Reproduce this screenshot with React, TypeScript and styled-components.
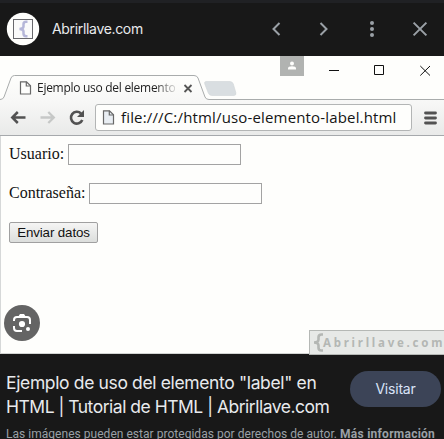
import React from "react";
import styled, { createGlobalStyle } from "styled-components";

const GlobalStyle = createGlobalStyle`
  * { box-sizing: border-box; }
  body { margin: 0; background: #181818; overflow: hidden; }
`;

const Viewer = styled.main`
  width: 444px;
  height: 439px;
  overflow: hidden;
  background: #181818;
  font-family: Inter, sans-serif;
`;

const Header = styled.header`
  height: 56px;
  border-top: 3px solid #202124;
  display: flex;
  align-items: center;
  padding: 0 12px 1px 6px;
`;

const Avatar = styled.svg`
  width: 34px;
  height: 34px;
  flex: none;
`;

const SiteName = styled.div`
  margin: -1px 0 0 12px;
  flex: 1;
  color: #e8eaed;
  font-size: 14px;
  line-height: 20px;
  letter-spacing: -0.33px;
`;

const HeaderActions = styled.nav`
  display: flex;
  gap: 24px;
`;

const IconButton = styled.button`
  width: 24px;
  height: 24px;
  padding: 0;
  border: 0;
  background: none;
  color: #9aa0a6;
  svg { display: block; }
`;

const Browser = styled.section`
  position: relative;
  height: 298px;
  background: #fefefc;
  border-bottom: 1px solid #d2d4d2;
`;

const TabStrip = styled.div`
  height: 44px;
  position: relative;
`;

const StripArt = styled.svg`
  position: absolute;
  inset: 0;
`;

const Tab = styled.div`
  position: absolute;
  left: 19px;
  top: 23px;
  width: 180px;
  height: 18px;
  display: flex;
  align-items: center;
`;

const TabTitle = styled.div`
  margin-left: 5px;
  width: 138px;
  white-space: nowrap;
  font: 12px/18px "Open Sans", sans-serif;
  letter-spacing: -0.28px;
  color: #222;
  mask-image: linear-gradient(90deg, #000 118px, transparent 142px);
`;

const Toolbar = styled.div`
  height: 36px;
  display: flex;
  align-items: center;
  padding: 0 6px 0 10px;
  background: linear-gradient(#f8f8f7, #e9eae9);
  border-bottom: 1px solid #a6a9ac;
`;

const NavIcons = styled.svg`
  width: 85px;
  height: 35px;
  flex: none;
`;

const AddressBar = styled.div`
  width: 317px;
  height: 27px;
  flex: none;
  display: flex;
  align-items: center;
  border: 1px solid #b3b5b5;
  border-radius: 3px;
  background: #fefefc;
  padding-left: 6px;
`;

const Address = styled.span`
  margin: -1px 0 0 6px;
  font: 15px/22px "Open Sans", sans-serif;
  letter-spacing: 0.16px;
  color: #151515;
  white-space: nowrap;
`;

const MenuIcon = styled.svg`
  margin-left: 12px;
  flex: none;
`;

const Page = styled.form`
  height: 217px;
  border-left: 1px solid #d6d8d8;
  padding: 8px 0 0 8px;
  font: 16px/20px "Liberation Serif", serif;
  color: #111;
`;

const Field = styled.label`
  display: flex;
  height: 21px;
  margin-bottom: 18px;
`;

const FieldName = styled.span<{ $width: number }>`
  width: ${(p) => p.$width}px;
  white-space: nowrap;
`;

const Input = styled.input`
  width: 173px;
  height: 21px;
  border: 1px solid #a3a3a3;
  background: #fefefc;
  padding: 0;
  border-radius: 0;
`;

const Submit = styled.button`
  display: block;
  width: 89px;
  height: 21px;
  padding: 0;
  border: 1px solid #a0a0a0;
  border-radius: 2px;
  background: linear-gradient(#f5f5f4, #dcdedc);
  font: 13.33px/18px "Liberation Sans", sans-serif;
  letter-spacing: -0.12px;
  color: #111;
  white-space: nowrap;
`;

const Lens = styled.svg`
  position: absolute;
  left: 4px;
  top: 249px;
`;

const Watermark = styled.div`
  position: absolute;
  left: 309px;
  top: 274px;
  width: 135px;
  height: 25px;
  border: 1px solid #b5b8b5;
  border-right: 0;
  background: #e7e9e7;
  display: flex;
  align-items: center;
  color: #b4b7b4;
  white-space: nowrap;
`;

const WatermarkName = styled.span`
  font: bold 11.5px/22px "Noto Sans", sans-serif;
  letter-spacing: 2.75px;
  margin-right: -3px;
`;

const Brace = styled.svg`
  width: 13px;
  height: 23px;
  flex: none;
`;

const Footer = styled.footer`
  height: 85px;
  padding: 17px 3px 0 6px;
`;

const TitleRow = styled.div`
  display: flex;
  justify-content: space-between;
  align-items: flex-start;
`;

const Title = styled.h1`
  margin: 0;
  font-size: 17.5px;
  line-height: 24px;
  font-weight: 400;
  color: #e8eaed;
  white-space: nowrap;
`;

const TitleLine = styled.span<{ $spacing: number }>`
  display: block;
  letter-spacing: ${(p) => p.$spacing}px;
`;

const Visit = styled.button`
  width: 91px;
  height: 36px;
  padding: 0 0 2px;
  border: 0;
  border-radius: 18px;
  background: #3c4457;
  color: #d9e3f8;
  font: 14px Inter, sans-serif;
  letter-spacing: -0.2px;
`;

const Notice = styled.p`
  margin: 7px 0 0;
  color: #9aa0a6;
  font: 12px/16px Roboto, sans-serif;
  white-space: nowrap;
`;

const NoticeText = styled.span`
  letter-spacing: 0.03px;
`;

const MoreInfo = styled.b`
  letter-spacing: 0.26px;
`;

const DocumentSvg = styled.svg`
  flex: none;
`;

const Document = ({ fill = "#fefefc", height = 14 }: { fill?: string; height?: number }) => (
  <DocumentSvg width="13" height={height + 1} viewBox={`0 0 13 ${height + 1}`}>
    <path d={`M1.5 .8H7.5L11.5 4.8V${height}H1.5Z`} fill={fill} stroke="#686868" strokeWidth="1.2" />
    <path d="M7.3 .8V5H11.5" fill="none" stroke="#686868" strokeWidth="1.2" />
  </DocumentSvg>
);

const Glyph = ({ children }: { children: React.ReactNode }) => (
  <svg width="24" height="24" viewBox="0 0 24 24" fill="none" stroke="currentColor" strokeWidth="2">
    {children}
  </svg>
);

export default function App() {
  return (
    <Viewer>
      <GlobalStyle />
      <Header>
        <Avatar viewBox="0 0 34 34">
          <circle cx="17" cy="17" r="16.2" fill="#fefefc" />
          <rect x="7.5" y="7.5" width="19" height="19" fill="#fafafa" stroke="#68686c" />
          <path d="M21.5 9.8h-1.4q-2.6 0-2.6 2.4v2.3q0 2.3-4 2.5q4 .2 4 2.5v2.3q0 2.4 2.6 2.4h1.4" fill="none" stroke="#b5b6d8" strokeWidth="2.5" />
        </Avatar>
        <SiteName>Abrirllave.com</SiteName>
        <HeaderActions>
          <IconButton aria-label="Anterior"><Glyph><path d="m15.5 6-6 6 6 6" /></Glyph></IconButton>
          <IconButton aria-label="Siguiente"><Glyph><path d="m8.5 6 6 6-6 6" /></Glyph></IconButton>
          <IconButton aria-label="Más opciones">
            <Glyph>
              <g fill="currentColor" stroke="none">
                <circle cx="12" cy="6" r="2" /><circle cx="12" cy="12" r="2" /><circle cx="12" cy="18" r="2" />
              </g>
            </Glyph>
          </IconButton>
          <IconButton aria-label="Cerrar"><Glyph><path d="m5.6 5.6 12.8 12.8m0-12.8L5.6 18.4" /></Glyph></IconButton>
        </HeaderActions>
      </Header>

      <Browser>
        <TabStrip>
          <StripArt width="444" height="44" viewBox="0 0 444 44">
            <defs>
              <linearGradient id="tab" x2="0" y2="1">
                <stop stopColor="#fefefc" /><stop offset="1" stopColor="#f7f7f6" />
              </linearGradient>
            </defs>
            <path d="M0 43.5q3 0 4-2.5L11 22q1-2.5 3.5-2.5H194q3 0 4 2.5L205 41q1 2.5 4 2.5H444V45H0Z" fill="url(#tab)" stroke="#a9acac" />
            <path d="M206 25.5h24q2.5 0 3.3 2.5l2.5 8.5q.8 3-2 3h-22q-2.5 0-3.5-2.5l-3.5-9q-.8-2.5 1.2-2.5Z" fill="#d9dee1" stroke="#d0d5d7" strokeWidth=".6" />
            <path d="M280 0h24v20h-24Z" fill="#b1b3b1" />
            <g fill="#fefefc"><circle cx="292" cy="7.5" r="2" /><path d="M288 13.5v-1.2q0-2 4-2t4 2v1.2Z" /></g>
            <path d="M329 14.5h10M374.5 9.5h9v9h-9ZM420.3 10l9.7 9.5m0-9.5-9.7 9.5" fill="none" stroke="#111" />
            <path d="m184.5 29 7 7m0-7-7 7" stroke="#555" strokeWidth="1.8" />
          </StripArt>
          <Tab>
            <Document height={13} />
            <TabTitle>Ejemplo uso del elemento</TabTitle>
          </Tab>
        </TabStrip>
        <Toolbar>
          <NavIcons viewBox="0 0 85 35" fill="none">
            <path d="M15.5 17.5H3.5M7.8 12l-5.5 5.5 5.5 5.5" stroke="#525252" strokeWidth="2.5" />
            <path d="M30.5 17.5h12M38.3 12l5.5 5.5-5.5 5.5" stroke="#c6c8c7" strokeWidth="2.3" />
            <path d="M71 13.5A5.9 5.9 0 1 0 72.3 20" stroke="#525252" strokeWidth="2.6" />
            <path d="M74 10v7h-7Z" fill="#525252" />
          </NavIcons>
          <AddressBar>
            <Document fill="#e9eef3" height={14} />
            <Address>file:///C:/html/uso-elemento-label.html</Address>
          </AddressBar>
          <MenuIcon width="13" height="14">
            <path d="M1.5 2h10M1.5 7h10M1.5 12h10" stroke="#525252" strokeWidth="2.8" strokeLinecap="round" />
          </MenuIcon>
        </Toolbar>
        <Page>
          <Field><FieldName $width={59}>Usuario:</FieldName><Input /></Field>
          <Field><FieldName $width={80}>Contraseña:</FieldName><Input /></Field>
          <Submit type="button">Enviar datos</Submit>
        </Page>
        <Lens width="36" height="36" viewBox="0 0 36 36">
          <circle cx="18" cy="18" r="18" fill="#646464" />
          <path d="M10 16v-1q0-3 3-3h10q3 0 3 3v4M10 21v2q0 3 3 3h5" fill="none" stroke="#fff" strokeWidth="2" />
          <path d="m14 12 2-3h4l2 3Z" fill="#fff" />
          <circle cx="18" cy="19" r="3.1" fill="#fff" /><circle cx="24" cy="24" r="2" fill="#fff" />
        </Lens>
        <Watermark>
          <Brace viewBox="0 0 13 23">
            <path d="M13 3.5h-1.5q-3 0-3 2.8v2.2q0 3-4.5 3q4.5 0 4.5 3v2.2q0 2.8 3 2.8H13" fill="none" stroke="#b4b7b4" strokeWidth="2.6" />
          </Brace>
          <WatermarkName>Abrirllave.com</WatermarkName>
        </Watermark>
      </Browser>

      <Footer>
        <TitleRow>
          <Title>
            <TitleLine $spacing={-0.36}>Ejemplo de uso del elemento "label" en</TitleLine>
            <TitleLine $spacing={-0.49}>HTML | Tutorial de HTML | Abrirllave.com</TitleLine>
          </Title>
          <Visit>Visitar</Visit>
        </TitleRow>
        <Notice>
          <NoticeText>Las imágenes pueden estar protegidas por derechos de autor. </NoticeText>
          <MoreInfo>Más información</MoreInfo>
        </Notice>
      </Footer>
    </Viewer>
  );
}
